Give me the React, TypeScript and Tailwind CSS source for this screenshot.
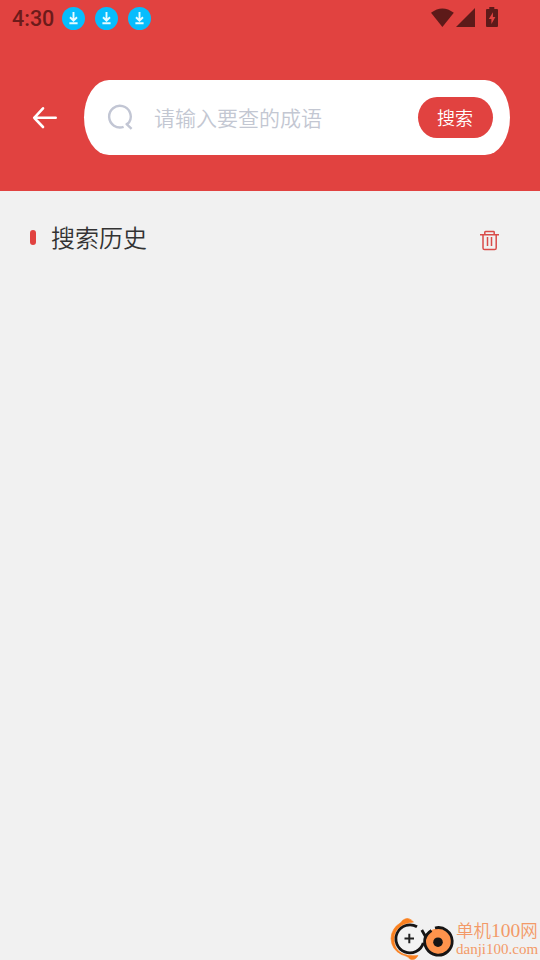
import React from "react";

function DownloadBadge() {
  return (
    <svg width="23" height="23" viewBox="0 0 23 23" fill="none">
      <circle cx="11.5" cy="11.5" r="11.5" fill="#06bdfd" />
      <path d="M11.5 5v8.4M8 10.3l3.5 3.4 3.5-3.4M7.4 16.3h8.2" stroke="#e6fbff" strokeWidth="1.9" />
    </svg>
  );
}

function StatusBar() {
  return (
    <div className="flex h-[37px] items-center pl-3 pr-[41px]">
      <span className="w-[50px] pt-px font-['Roboto',sans-serif] text-[21.5px] font-medium leading-none text-[#6c1b1a]">
        4:30
      </span>
      <div className="flex gap-2.5">
        <DownloadBadge />
        <DownloadBadge />
        <DownloadBadge />
      </div>
      <svg className="ml-auto overflow-visible" width="69" height="22" viewBox="0 0 69 22" fill="#5d1a19">
        <path d="M1 4.8Q12.4-3.8 23.8 4.8L12.4 19z" />
        <path d="M45 0v19H26z" />
        <path fillRule="evenodd" d="M59.3-1h5v2H67q1 0 1 1v16q0 1-1 1H57q-1 0-1-1V2q0-1 1-1h2.3zM63 4.2L58.8 11h2.6v5l4-7h-2.5z" />
      </svg>
    </div>
  );
}

function SearchBar() {
  return (
    <div className="mt-[43px] flex h-[75px] items-center px-[30px]">
      <svg width="30" height="26" viewBox="0 0 30 26" fill="none" stroke="#fff" strokeWidth="2.6" strokeLinecap="round" strokeLinejoin="round">
        <path d="M25.7 12.8H4.2M13 3.3L4.2 12.8 13 22" />
      </svg>
      <div className="ml-6 flex h-[75px] flex-1 items-center rounded-[25px/37.5px] bg-white pl-[23px] pr-[17px]">
        <svg width="28" height="28" viewBox="0 0 28 28" fill="none" stroke="#c2c6d4" strokeWidth="2.4">
          <path d="M16.6 22.8A10.8 10.8 0 1 1 22.2 18.2Q21.4 19.5 19.6 20.1L24.6 24.8" strokeLinejoin="round" />
        </svg>
        <span className="ml-[19px] -mt-0.5 font-['Noto_Sans_CJK_SC',sans-serif] text-[21px] font-[350] leading-[30px] text-[#c3c7d2]">
          请输入要查的成语
        </span>
        <button className="ml-auto h-[41px] w-[75px] rounded-[19px/20.5px] bg-[#e14240] pr-px font-['Noto_Sans_CJK_SC',sans-serif] text-[18px] font-[350] leading-[41px] text-white">
          搜索
        </button>
      </div>
    </div>
  );
}

function Watermark() {
  return (
    <div className="flex h-[44px] items-start justify-end pr-0.5">
      <svg className="mr-px" width="66" height="44" viewBox="0 0 66 44" fill="none">
        <path d="M24.500 6Q20 1 16 3 13 4 12 6.500 2.500 12 2 22.500 2.500 33.500 12.500 38.500 19 40 21 43 26 45 29 39.500 5 41.500 5 22.500 6 8 24.500 6z" fill="#fa801f" stroke="#fa801f" strokeWidth=".6" />
        <circle cx="20.300" cy="22.800" r="13.800" fill="#f3f3f3" />
        <path d="M28 10.800A14 14 0 1 0 34.300 27" stroke="#171515" strokeWidth="2.800" />
        <path d="M15.500 22.500h9.500M20.300 17.800v9.500" stroke="#222" strokeWidth="2" />
        <circle cx="49" cy="26" r="13.500" fill="#ff934c" />
        <path d="M46 12a13.800 13.800 0 1 1-9.500 8.500L32.800 14M36 23Q37 18 42.500 14.500" stroke="#171515" strokeWidth="2.800" />
        <circle cx="49" cy="26.200" r="4.800" fill="#171515" />
      </svg>
      <div className="w-[82px] text-[#f39a68]">
        <p className="whitespace-nowrap pt-[2px] font-['Noto_Sans_CJK_SC',sans-serif] text-[17.500px] font-[350] leading-[23px]">
          单机<span className="font-['Liberation_Serif',serif] text-[19.500px]">100</span>网
        </p>
        <p className="whitespace-nowrap font-['Liberation_Serif',serif] text-[15px] leading-[14px]">danji100.com</p>
      </div>
    </div>
  );
}

export default function App() {
  return (
    <div className="flex h-[960px] w-[540px] flex-col overflow-hidden bg-[#f1f1f1]">
      <header className="h-[191px] shrink-0 bg-[#e14240]">
        <StatusBar />
        <SearchBar />
      </header>
      <main className="flex-1 pl-[30px] pr-[40px] pt-[26px]">
        <div className="flex h-[40px] items-center">
          <span className="h-[15px] w-1.5 rounded-[3px] bg-[#e14240]" />
          <h1 className="ml-[15px] font-['Noto_Sans_CJK_SC',sans-serif] text-[24px] font-[350] leading-[36px] text-[#333]">
            搜索历史
          </h1>
          <svg className="ml-auto mt-[7px]" width="20" height="21" viewBox="0 0 20 21" fill="none" stroke="#d94b49" strokeWidth="1.5">
            <path d="M0 4.700h19M4.800 4.500V2.200q0-.7.7-.7h8q.7 0 .7.7v2.300M3 5v13q0 1.600 1.600 1.600h10q1.600 0 1.600-1.600V5M7.500 7v9M11.500 7v9" />
          </svg>
        </div>
      </main>
      <Watermark />
    </div>
  );
}
